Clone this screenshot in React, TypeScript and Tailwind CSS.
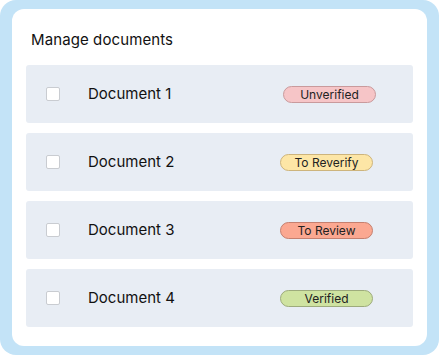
const docs = [
  { name: 'Document 1', status: 'Unverified', cls: 'bg-[#f6c5c7] border-[#c99a9c] ml-[3px]' },
  { name: 'Document 2', status: 'To Reverify', cls: 'bg-[#fde6a6] border-[#cdb47c]' },
  { name: 'Document 3', status: 'To Review', cls: 'bg-[#fba891] border-[#c5806f]' },
  { name: 'Document 4', status: 'Verified', cls: 'bg-[#cfe3a1] border-[#9dab7c]' },
];

export default function App() {
  return (
    <div className="w-[439px] h-[355px] bg-[#c3e3f7] rounded-[16px] px-[12px] py-[9px] font-['Inter',sans-serif]">
      <div className="bg-white rounded-[12px] h-full px-[14px] pt-[22px]">
        <h1 className="text-[15px] leading-[18px] text-[#111] pl-[5px] tracking-[0.1px]">Manage documents</h1>
        <div className="mt-[16px] flex flex-col gap-[10px]">
          {docs.map((d) => (
            <div key={d.name} className="h-[58px] bg-[#e8edf4] rounded-[3px] flex items-center pl-[20px]">
              <span className="w-[14px] h-[14px] bg-white border border-[#c9ccd1] rounded-[2px]" />
              <span className="ml-[28px] w-[192px] text-[15px] text-[#111]">{d.name}</span>
              <span className={`w-[93px] h-[17px] rounded-full border flex items-center justify-center text-[12px] leading-[15px] pt-[1px] text-[#222] ${d.cls}`}>
                {d.status}
              </span>
            </div>
          ))}
        </div>
      </div>
    </div>
  );
}
